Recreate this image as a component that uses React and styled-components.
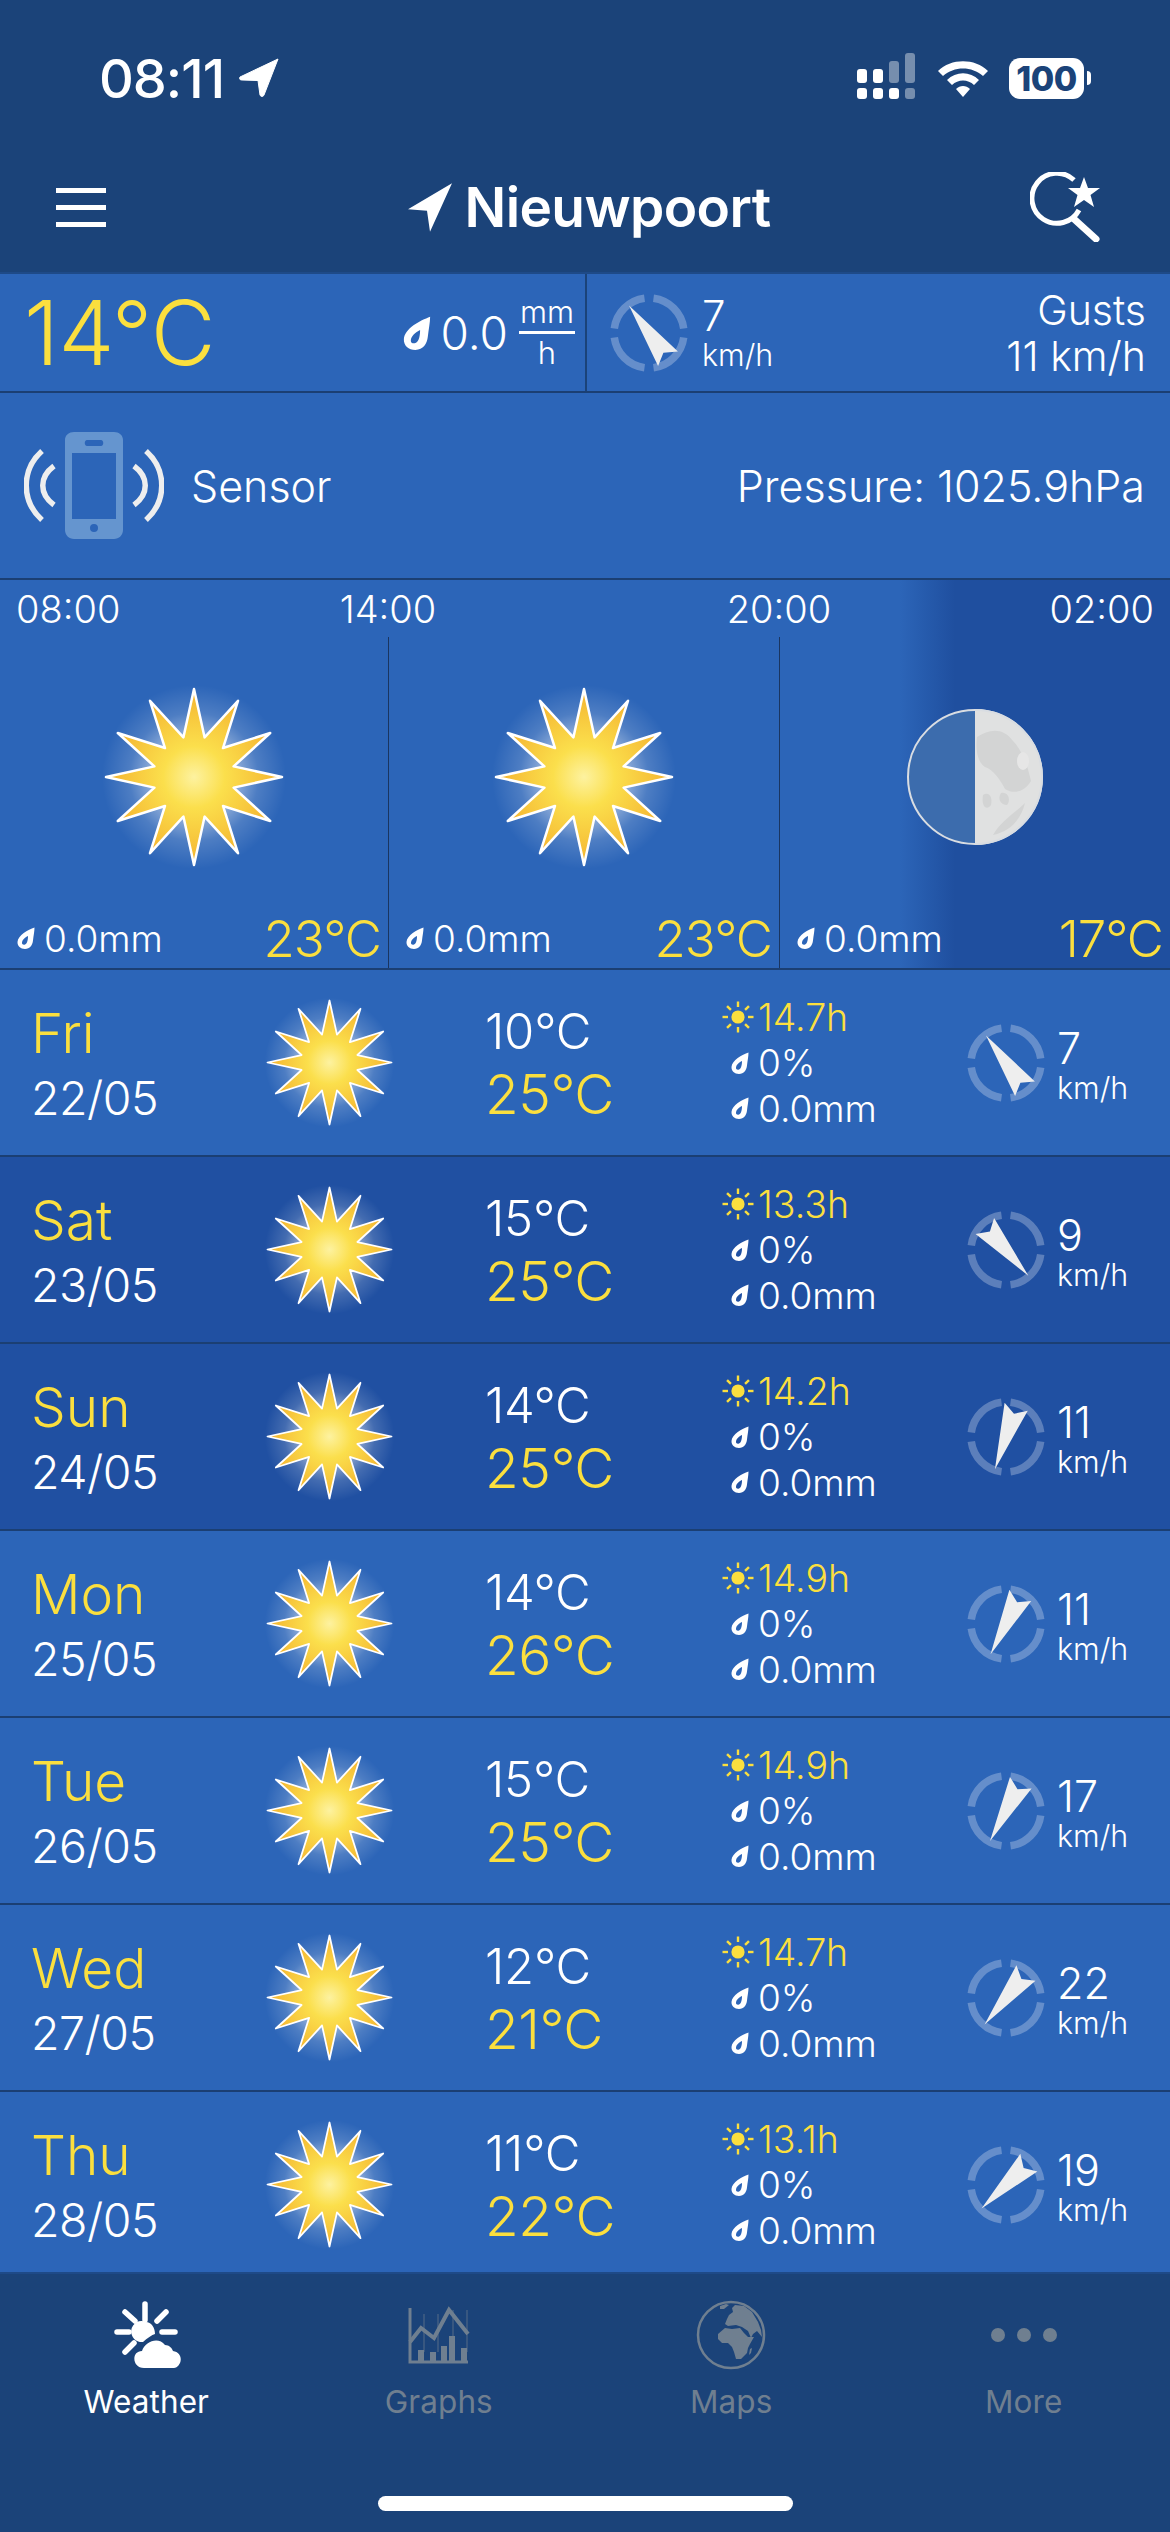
import React, { useId } from 'react';
import styled, { createGlobalStyle } from 'styled-components';

const YELLOW = '#fbdf3e';

const Global = createGlobalStyle`
  html, body { margin: 0; padding: 0; background: #1b4379; }
  * { box-sizing: border-box; }
`;

const Phone = styled.div`
  width: 1170px;
  height: 2532px;
  overflow: hidden;
  display: flex;
  flex-direction: column;
  background: #1b4379;
  color: #fff;
  font-family: Inter, "Liberation Sans", sans-serif;
`;

const Top = styled.header`
  height: 274px;
  flex: none;
  border-bottom: 2px solid #1e4a88;
`;

const StatusBar = styled.div`
  height: 149px;
  padding: 50px 86px 0 99px;
  display: flex;
  justify-content: space-between;
  align-items: flex-start;
`;

const Clock = styled.div`
  display: flex;
  align-items: center;
  gap: 15px;
  height: 56px;
  font-size: 54px;
  font-weight: 500;
  letter-spacing: -1px;
`;

const Indicators = styled.div`
  display: flex;
  align-items: center;
  height: 56px;
  gap: 20px;
`;

const Battery = styled.div`
  position: relative;
  width: 75px;
  height: 41px;
  border-radius: 11px;
  background: #fff;
  color: #1b4379;
  font-size: 34px;
  font-weight: 800;
  line-height: 41px;
  text-align: center;
  letter-spacing: -0.5px;
  &::after {
    content: '';
    position: absolute;
    right: -7px;
    top: 13px;
    width: 4px;
    height: 14px;
    border-radius: 0 4px 4px 0;
    background: #fff;
  }
`;

const Nav = styled.nav`
  height: 116px;
  padding: 0 68px 0 56px;
  display: flex;
  align-items: center;
  justify-content: space-between;
`;

const Burger = styled.div`
  width: 50px;
  display: flex;
  flex-direction: column;
  gap: 12px;
  span {
    display: block;
    height: 5px;
    background: #fff;
  }
`;

const Title = styled.div`
  display: flex;
  align-items: center;
  gap: 11px;
  font-size: 55px;
  font-weight: 600;
  letter-spacing: -0.6px;
  margin-left: 42px;
`;

const NowRow = styled.section`
  height: 119px;
  flex: none;
  display: flex;
  background: #2c65b8;
  border-bottom: 2px solid #1b3f73;
`;

const NowLeft = styled.div`
  width: 587px;
  padding: 0 10px 0 24px;
  display: flex;
  align-items: center;
  border-right: 2px solid #1b4379;
`;

const BigTemp = styled.div`
  font-size: 89px;
  font-weight: 300;
  color: ${YELLOW};
  letter-spacing: -0.5px;
  margin-right: auto;
  line-height: 1;
`;

const RainNow = styled.div`
  display: flex;
  align-items: center;
  gap: 10px;
  font-size: 46px;
  font-weight: 300;
`;

const Fraction = styled.div`
  width: 56px;
  margin-left: 11px;
  display: flex;
  flex-direction: column;
  align-items: center;
  font-size: 31px;
  font-weight: 300;
  line-height: 38px;
  div:first-child { border-bottom: 3px solid #fff; width: 100%; text-align: center; }
`;

const NowRight = styled.div`
  flex: 1;
  padding: 0 24px 0 22px;
  display: flex;
  align-items: center;
  gap: 13px;
`;

const Gusts = styled.div`
  margin-left: auto;
  text-align: right;
  font-size: 41px;
  font-weight: 300;
  line-height: 46px;
`;

const SensorRow = styled.section`
  height: 187px;
  flex: none;
  padding: 0 25px 0 24px;
  display: flex;
  align-items: center;
  gap: 27px;
  font-size: 43px;
  font-weight: 300;
  background: #2c65b8;
  border-bottom: 2px solid #1b3f73;
`;

const Pressure = styled.div`
  margin-left: auto;
`;

const Forecast = styled.section`
  height: 390px;
  flex: none;
  display: flex;
  flex-direction: column;
  background: linear-gradient(to right, #2c65b8 900px, #1f4f9f 955px);
  border-bottom: 2px solid #1b3f73;
`;

const Hours = styled.div`
  height: 57px;
  display: grid;
  grid-template-columns: 232px 312px 470px 156px;
  align-items: center;
  font-size: 38px;
  font-weight: 300;
`;

const Hour = styled.div`
  text-align: ${(p) => p.$align || 'center'};
  padding: ${(p) => (p.$align === 'left' ? '0 0 0 16px' : p.$align === 'right' ? '0 16px 0 0' : '0')};
`;

const Slots = styled.div`
  flex: 1;
  display: grid;
  grid-template-columns: 389px 391px 390px;
`;

const Slot = styled.div`
  display: flex;
  flex-direction: column;
  align-items: center;
  padding-top: 35px;
  border-right: ${(p) => (p.$last ? 'none' : '1px solid #1a3560')};
`;

const SlotArt = styled.div`
  height: 210px;
  display: flex;
  align-items: center;
  justify-content: center;
`;

const SlotFoot = styled.div`
  align-self: stretch;
  margin-top: auto;
  height: 60px;
  padding: 0 7px 0 17px;
  display: flex;
  align-items: center;
  gap: 9px;
  font-size: 37px;
  font-weight: 300;
`;

const SlotTemp = styled.div`
  margin-left: auto;
  font-size: 51px;
  font-weight: 300;
  color: ${YELLOW};
  letter-spacing: -1px;
`;

const Days = styled.section`
  flex: none;
  height: 1302px;
  display: flex;
  flex-direction: column;
`;

const DayRow = styled.div`
  height: 187px;
  flex: none;
  padding-left: 31px;
  display: grid;
  grid-template-columns: 186px 224px 279px 240px 1fr;
  grid-template-rows: 185px;
  background: ${(p) => (p.$dark ? '#2050a2' : '#2c65b8')};
  border-bottom: 2px solid #1b3f73;
  &:last-child {
    height: 180px;
    border-bottom: none;
  }
`;

const Cell = styled.div`
  display: flex;
  flex-direction: column;
  justify-content: center;
`;

const DayName = styled.div`
  font-size: 55px;
  font-weight: 300;
  line-height: 64px;
  margin-top: 6px;
  color: ${YELLOW};
`;

const DayDate = styled.div`
  font-size: 46.5px;
  font-weight: 300;
  line-height: 66px;
  letter-spacing: -0.5px;
`;

const ArtCell = styled(Cell)`
  align-items: center;
`;

const Temps = styled(Cell)`
  padding-left: 44px;
`;

const Low = styled.div`
  font-size: 49px;
  font-weight: 300;
  line-height: 63px;
  letter-spacing: -0.2px;
`;

const High = styled.div`
  font-size: 55px;
  font-weight: 300;
  line-height: 63px;
  letter-spacing: -0.5px;
  color: ${YELLOW};
`;

const Detail = styled.div`
  height: 45.5px;
  display: flex;
  align-items: center;
  font-size: ${(p) => (p.$sun ? '37.5px' : '37px')};
  font-weight: 300;
  color: ${(p) => (p.$sun ? YELLOW : '#fff')};
`;

const DetailIcon = styled.div`
  width: 36px;
  flex: none;
  display: flex;
  justify-content: center;
  padding-left: ${(p) => (p.$sun ? '0' : '4px')};
  margin-right: 2px;
`;

const WindCell = styled.div`
  display: flex;
  align-items: center;
  padding-left: 6px;
  gap: 11px;
`;

const WindText = styled.div`
  display: flex;
  flex-direction: column;
  padding-top: ${(p) => (p.$top ? '0' : '5px')};
`;

const WindSpeed = styled.div`
  font-size: ${(p) => (p.$top ? '42px' : '43px')};
  font-weight: 300;
  line-height: ${(p) => (p.$top ? '44px' : '46px')};
`;

const WindUnit = styled.div`
  font-size: 30.5px;
  font-weight: 300;
  line-height: 34px;
`;

const TabBar = styled.footer`
  flex: 1;
  display: flex;
  flex-direction: column;
  align-items: center;
  border-top: 2px solid #1e4a88;
`;

const Tabs = styled.div`
  align-self: stretch;
  display: grid;
  grid-template-columns: repeat(4, 1fr);
  padding-top: 24px;
`;

const Tab = styled.div`
  display: flex;
  flex-direction: column;
  align-items: center;
  color: ${(p) => (p.$active ? '#fff' : '#6f7f90')};
  font-size: 31.5px;
  font-weight: 400;
  letter-spacing: 0.1px;
`;

const TabIcon = styled.div`
  height: 74px;
  display: flex;
  align-items: center;
  justify-content: center;
  margin-bottom: 10px;
`;

const Dots = styled.div`
  display: flex;
  gap: 12px;
  span {
    width: 14px;
    height: 14px;
    border-radius: 50%;
    background: #6f7f90;
  }
`;

const HomeBar = styled.div`
  width: 415px;
  height: 15px;
  margin-top: 75px;
  border-radius: 8px;
  background: #fff;
`;

/* drawings */

function starPoints(outer, inner) {
  const pts = [];
  for (let i = 0; i < 24; i++) {
    const r = i % 2 === 0 ? outer : inner;
    const a = (i * Math.PI) / 12;
    pts.push(`${(r * Math.sin(a)).toFixed(2)},${(-r * Math.cos(a)).toFixed(2)}`);
  }
  return pts.join(' ');
}

const STAR = starPoints(88, 41);

function Sun({ size }) {
  const id = useId();
  return (
    <svg width={size} height={size} viewBox="-110 -110 220 220">
      <defs>
        <radialGradient id={id + 'g'}>
          <stop offset="0.4" stopColor="#fff" stopOpacity="0.55" />
          <stop offset="0.7" stopColor="#fff" stopOpacity="0.16" />
          <stop offset="1" stopColor="#fff" stopOpacity="0" />
        </radialGradient>
        <radialGradient id={id + 'f'} gradientUnits="userSpaceOnUse" cx="0" cy="0" r="88">
          <stop offset="0" stopColor="#fdf2a0" />
          <stop offset="0.35" stopColor="#fbdf4c" />
          <stop offset="1" stopColor="#f4b330" />
        </radialGradient>
      </defs>
      <circle r="92" fill={`url(#${id}g)`} />
      <polygon points={STAR} fill={`url(#${id}f)`} stroke="#fff" strokeWidth="2.5" strokeLinejoin="round" />
    </svg>
  );
}

function Moon() {
  return (
    <svg width="140" height="140" viewBox="-70 -70 140 140">
      <path d="M0 -68A68 68 0 0 1 0 68Z" fill="#e0e1e1" />
      <path d="M0 -67A67 67 0 0 0 0 67Z" fill="#3c6cad" />
      <circle r="67" fill="none" stroke="#d9dde2" strokeWidth="2" />
      <g fill="#d3d4d4">
        <path d="M2 -40C14 -48 28 -50 38 -36C46 -28 52 -14 56 4C50 14 40 18 30 12C26 4 18 -8 10 -10C4 -14 0 -24 2 -40Z" />
        <path d="M8 18C14 14 18 20 16 28C12 34 6 30 8 18ZM26 16C34 14 36 24 32 28C26 28 22 22 26 16Z" />
        <path d="M18 58C26 44 40 36 50 26C46 42 36 54 18 58Z" />
      </g>
      <ellipse cx="48" cy="-16" rx="6" ry="9" fill="#e6e6e6" />
    </svg>
  );
}

function Drop({ w = 18, h = 22 }) {
  return (
    <svg width={w} height={h} viewBox="0 0 18 22">
      <path
        fillRule="evenodd"
        fill="#fff"
        d="M17.5 0.5C11 3 1 8 0.5 15C0.3 19 3.5 22 8 22C13 22 15.5 18 16 13.5C16.5 9 17.5 4 17.5 0.5ZM11 9C8 10.5 5 13 5 16C5 17.5 6.5 18 8 17.5C10.5 16.5 11 12 11 9Z"
      />
    </svg>
  );
}

function SunSmall() {
  const rays = [0, 45, 90, 135, 180, 225, 270, 315];
  return (
    <svg width="32" height="32" viewBox="-16 -16 32 32">
      <circle r="6.6" fill={YELLOW} />
      {rays.map((a) => (
        <line key={a} x1="0" y1="-10" x2="0" y2="-15.5" stroke={YELLOW} strokeWidth="2.4" transform={`rotate(${a})`} />
      ))}
    </svg>
  );
}

const RING = [
  'M-4.5 -34.7A35 35 0 0 0 -34.7 -4.5',
  'M4.5 -34.7A35 35 0 0 1 34.7 -4.5',
  'M-4.5 34.7A35 35 0 0 1 -34.7 4.5',
  'M4.5 34.7A35 35 0 0 0 34.7 4.5',
];

function Compass({ deg }) {
  return (
    <svg width="80" height="80" viewBox="-40 -40 80 80">
      {RING.map((d) => (
        <path key={d} d={d} fill="none" stroke="#fff" strokeOpacity="0.27" strokeWidth="7.5" />
      ))}
      <polygon points="0,-34 12.5,32 0,24.5 -12,32" fill="#eeeeee" transform={`rotate(${deg})`} />
    </svg>
  );
}

function LocationArrow({ size }) {
  return (
    <svg width={size} height={size * 1.1} viewBox="0 0 46 50">
      <path d="M45 1L1 27L20 28.5L23 49.5Z" fill="#fff" />
    </svg>
  );
}

function ClockArrow() {
  return (
    <svg width="40" height="40" viewBox="0 0 40 40">
      <path d="M39 1L1 19C0 21 1 22 3 22L19 22.5L21 37C22 39 24 39 25 37Z" fill="#fff" stroke="#fff" strokeLinejoin="round" />
    </svg>
  );
}

function Signal() {
  const bars = [
    [0, 27, 14, 1], [0, 8, 14, 1],
    [16, 27, 14, 1], [16, 8, 14, 1],
    [32, 27, 14, 1], [32, 0, 25, 0.4],
    [48, 27, 14, 0.4], [48, -8, 33, 0.4],
  ];
  return (
    <svg width="60" height="50" viewBox="0 -8 60 50">
      {bars.map(([x, y, h, o], i) => (
        <rect key={i} x={x} y={y} width="10" height={h - (y === 8 ? 0 : 3)} rx="3" fill="#fff" opacity={o} />
      ))}
    </svg>
  );
}

function Wifi() {
  return (
    <svg width="52" height="40" viewBox="0 0 52 40">
      <path d="M1 13C14 0 38 0 51 13L46 18C35 8 17 8 6 18Z" fill="#fff" />
      <path d="M10 22C19 13 33 13 42 22L37 27C31 21 21 21 15 27Z" fill="#fff" />
      <path d="M19 31C23 27 29 27 33 31L26 39Z" fill="#fff" />
    </svg>
  );
}

function SearchStar() {
  return (
    <svg width="72" height="70" viewBox="0 0 72 70">
      <path d="M44 8A25 25 0 1 0 49 38" fill="none" stroke="#fff" strokeWidth="5" />
      <line x1="44" y1="47" x2="66" y2="67" stroke="#fff" strokeWidth="7" strokeLinecap="round" />
      <polygon points="54,5 58,16 70,16 60.5,23 64,35 54,28 44,35 47.5,23 38,16 50,16" fill="#fff" />
    </svg>
  );
}

function PhoneIcon() {
  return (
    <svg width="140" height="108" viewBox="0 0 140 108">
      <path
        fillRule="evenodd"
        fill="#6595cf"
        d="M50 0H90C95 0 99 3 99 8V98C99 103 95 107 90 107H50C45 107 41 103 41 98V8C41 3 45 0 50 0ZM48 21V87H92V21ZM63 8C60 8 60 14 63 14H77C80 14 80 8 77 8ZM70 92A4 4 0 1 0 70 100A4 4 0 1 0 70 92Z"
      />
      <g fill="none" stroke="#eeeeee" strokeWidth="5.5">
        <path d="M18 19C-3 38 -3 69 18 88" />
        <path d="M30 34C15 45 15 62 30 73" />
        <path d="M122 19C143 38 143 69 122 88" />
        <path d="M110 34C125 45 125 62 110 73" />
      </g>
    </svg>
  );
}

function WeatherIcon() {
  return (
    <svg width="70" height="68" viewBox="-3 0 70 68">
      <g stroke="#fff" strokeWidth="5.5" strokeLinecap="round">
        <line x1="31" y1="3" x2="31" y2="19" />
        <line x1="11" y1="11" x2="21" y2="20" />
        <line x1="52" y1="11" x2="43" y2="20" />
        <line x1="3" y1="31" x2="15" y2="31" />
        <line x1="48" y1="31" x2="61" y2="31" />
        <line x1="11" y1="51" x2="20" y2="42" />
      </g>
      <path d="M32 21A10.500 10.500 0 1 0 29 41C33 37 38 34 41 33C41 26 37 21 32 21Z" fill="#fff" />
      <path d="M30 67C18 67 17 50 28 50C31 41 44 35 51 44C55 44 58 47 59 50C66 51 68 57 66 62C64 66 62 67 59 67Z" fill="#fff" />
    </svg>
  );
}

function GraphsIcon() {
  return (
    <svg width="62" height="58" viewBox="0 0 62 58">
      <g stroke="#6f7f90" fill="none">
        <path d="M2 2V56H60" strokeWidth="3" />
        <path d="M16 8V46M30 8V46M45 4V46M59 4V46" strokeWidth="1" opacity="0.7" />
        <path d="M2 36L13 22L26 32L41 4L60 28" strokeWidth="4" />
      </g>
      <g fill="#6f7f90">
        <rect x="10" y="44" width="6" height="12" />
        <rect x="22" y="46" width="6" height="10" />
        <rect x="33" y="40" width="6" height="16" />
        <rect x="41" y="30" width="6" height="26" />
        <rect x="53" y="42" width="6" height="14" />
      </g>
    </svg>
  );
}

function GlobeIcon() {
  return (
    <svg width="70" height="70" viewBox="0 0 70 70">
      <circle cx="35" cy="35" r="33" fill="none" stroke="#6f7f90" strokeWidth="2.5" />
      <g fill="#6f7f90">
        <path d="M39 5L48 6L56 12L62 22L65 30L66 37L61 31L57 34L55 38L52 31L46 27L40 25L32 26L29 24L31 19L33 15L37 12L36 8Z" />
        <path d="M22 34L29 28L36 29L44 28L48 33L52 37L58 37L54 44L52 48L51 53L45 59L40 59L38 52L36 47L32 43L26 43L22 39Z" />
        <path d="M54 49L56 48L55 53L53 55Z" />
        <path d="M24 6L30 4L33 5L28 9L24 9Z" />
      </g>
    </svg>
  );
}

const DAYS = [
  { name: 'Fri', date: '22/05', low: 10, high: 25, sun: '14.7h', wind: 7, deg: -36 },
  { name: 'Sat', date: '23/05', low: 15, high: 25, sun: '13.3h', wind: 9, deg: 139, dark: true },
  { name: 'Sun', date: '24/05', low: 14, high: 25, sun: '14.2h', wind: 11, deg: 199, dark: true },
  { name: 'Mon', date: '25/05', low: 14, high: 26, sun: '14.9h', wind: 11, deg: 207 },
  { name: 'Tue', date: '26/05', low: 15, high: 25, sun: '14.9h', wind: 17, deg: 208 },
  { name: 'Wed', date: '27/05', low: 12, high: 21, sun: '14.7h', wind: 22, deg: 219 },
  { name: 'Thu', date: '28/05', low: 11, high: 22, sun: '13.1h', wind: 19, deg: 226 },
];

const SLOTS = [
  { temp: '23°C', art: <Sun size={220} /> },
  { temp: '23°C', art: <Sun size={220} /> },
  { temp: '17°C', art: <Moon />, last: true },
];

export default function App() {
  return (
    <Phone>
      <Global />
      <Top>
        <StatusBar>
          <Clock>
            08:11
            <ClockArrow />
          </Clock>
          <Indicators>
            <Signal />
            <Wifi />
            <Battery>100</Battery>
          </Indicators>
        </StatusBar>
        <Nav>
          <Burger>
            <span />
            <span />
            <span />
          </Burger>
          <Title>
            <LocationArrow size={46} />
            Nieuwpoort
          </Title>
          <SearchStar />
        </Nav>
      </Top>

      <NowRow>
        <NowLeft>
          <BigTemp>14°C</BigTemp>
          <RainNow>
            <Drop w={28} h={34} />
            0.0
          </RainNow>
          <Fraction>
            <div>mm</div>
            <div>h</div>
          </Fraction>
        </NowLeft>
        <NowRight>
          <Compass deg={-36} />
          <WindText $top>
            <WindSpeed $top>7</WindSpeed>
            <WindUnit>km/h</WindUnit>
          </WindText>
          <Gusts>
            Gusts
            <br />
            11 km/h
          </Gusts>
        </NowRight>
      </NowRow>

      <SensorRow>
        <PhoneIcon />
        Sensor
        <Pressure>Pressure: 1025.9hPa</Pressure>
      </SensorRow>

      <Forecast>
        <Hours>
          <Hour $align="left">08:00</Hour>
          <Hour>14:00</Hour>
          <Hour>20:00</Hour>
          <Hour $align="right">02:00</Hour>
        </Hours>
        <Slots>
          {SLOTS.map((s, i) => (
            <Slot key={i} $last={s.last}>
              <SlotArt>{s.art}</SlotArt>
              <SlotFoot>
                <Drop />
                0.0mm
                <SlotTemp>{s.temp}</SlotTemp>
              </SlotFoot>
            </Slot>
          ))}
        </Slots>
      </Forecast>

      <Days>
        {DAYS.map((d) => (
          <DayRow key={d.name} $dark={d.dark}>
            <Cell>
              <DayName>{d.name}</DayName>
              <DayDate>{d.date}</DayDate>
            </Cell>
            <ArtCell>
              <Sun size={155} />
            </ArtCell>
            <Temps>
              <Low>{d.low}°C</Low>
              <High>{d.high}°C</High>
            </Temps>
            <Cell>
              <Detail $sun>
                <DetailIcon $sun>
                  <SunSmall />
                </DetailIcon>
                {d.sun}
              </Detail>
              <Detail>
                <DetailIcon>
                  <Drop />
                </DetailIcon>
                0%
              </Detail>
              <Detail>
                <DetailIcon>
                  <Drop />
                </DetailIcon>
                0.0mm
              </Detail>
            </Cell>
            <WindCell>
              <Compass deg={d.deg} />
              <WindText>
                <WindSpeed>{d.wind}</WindSpeed>
                <WindUnit>km/h</WindUnit>
              </WindText>
            </WindCell>
          </DayRow>
        ))}
      </Days>

      <TabBar>
        <Tabs>
          <Tab $active>
            <TabIcon>
              <WeatherIcon />
            </TabIcon>
            Weather
          </Tab>
          <Tab>
            <TabIcon>
              <GraphsIcon />
            </TabIcon>
            Graphs
          </Tab>
          <Tab>
            <TabIcon>
              <GlobeIcon />
            </TabIcon>
            Maps
          </Tab>
          <Tab>
            <TabIcon>
              <Dots>
                <span />
                <span />
                <span />
              </Dots>
            </TabIcon>
            More
          </Tab>
        </Tabs>
        <HomeBar />
      </TabBar>
    </Phone>
  );
}
